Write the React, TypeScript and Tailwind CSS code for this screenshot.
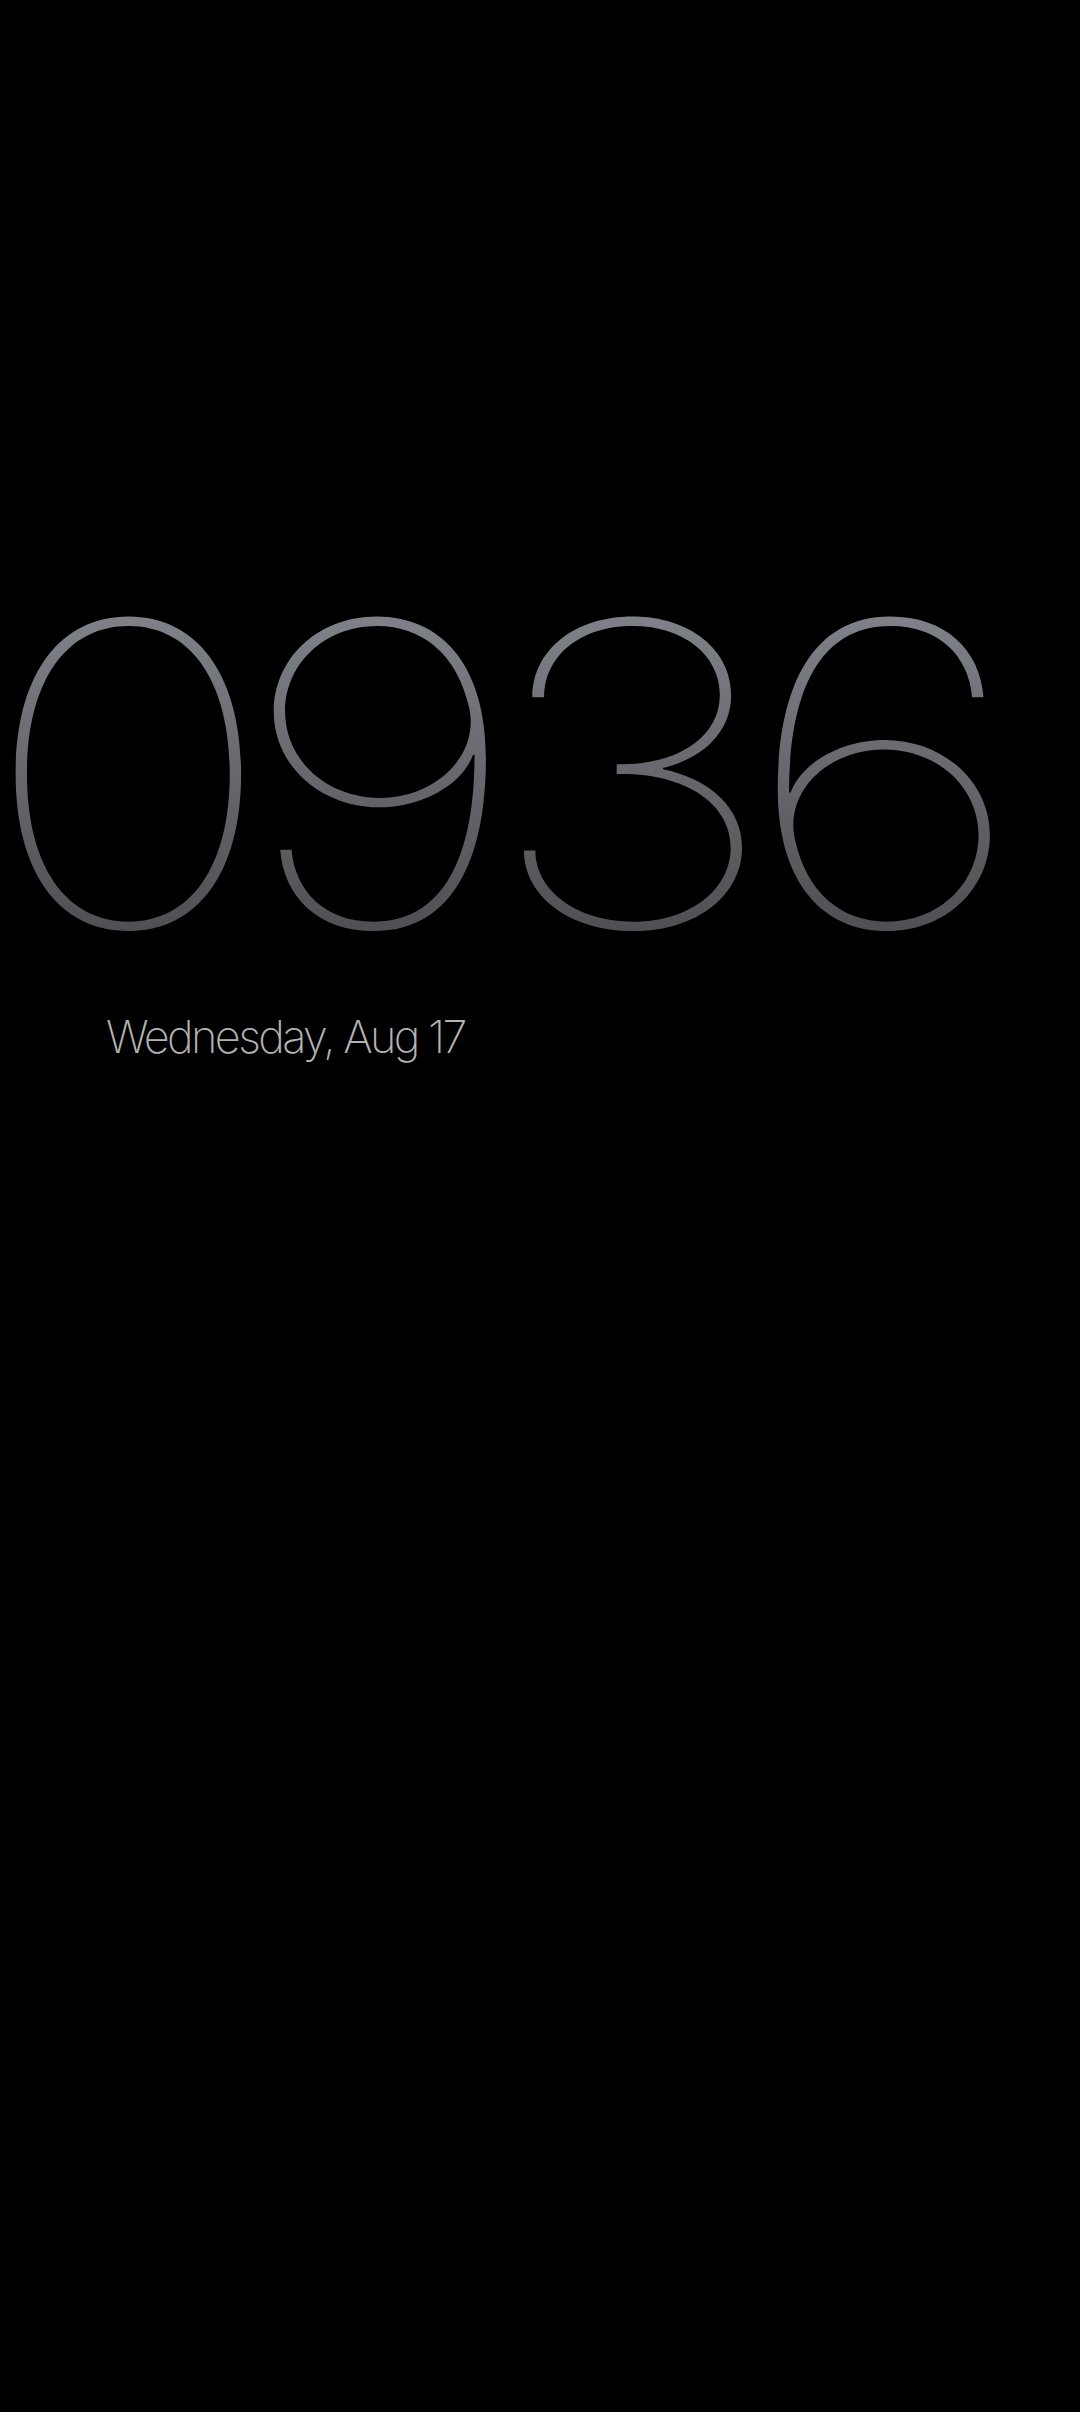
const digits = ['0', '9', '3', '6']

export default function App() {
  return (
    <div className="min-h-[2412px] w-[1080px] overflow-hidden bg-black">
      {/* big clock */}
      <div className="flex pt-[564px] pl-[2px]">
        {digits.map((d, i) => (
          <div key={i} className="flex w-[252px] justify-center">
            <span
              className="inline-block scale-x-120 bg-gradient-to-b from-[#878a92] to-[#47484a] bg-clip-text text-[421px] leading-none font-thin text-transparent"
              style={{ fontFamily: 'Inter, "Noto Sans", sans-serif' }}
            >
              {d}
            </span>
          </div>
        ))}
      </div>

      {/* date */}
      <div
        className="pl-[106px] pt-[29px] text-[45px] leading-none font-extralight tracking-[-2.6px] text-[#b3b3b3]"
        style={{ fontFamily: 'Inter, "Liberation Sans", sans-serif' }}
      >
        Wednesday, Aug 17
      </div>
    </div>
  )
}
